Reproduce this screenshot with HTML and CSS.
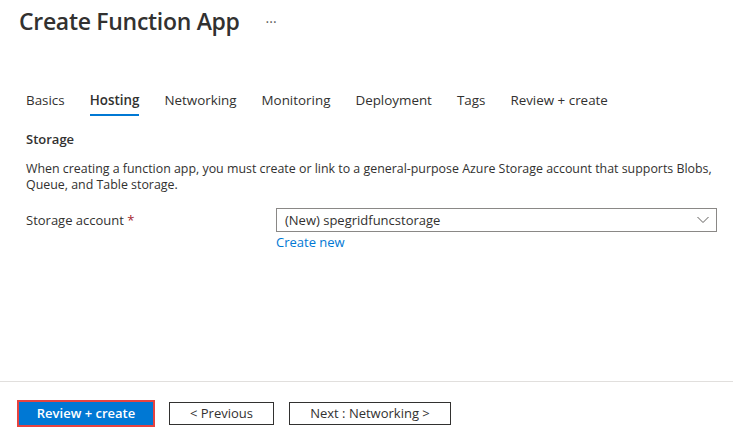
FILE: index.html
```html
<!DOCTYPE html>
<html lang="en">
<head>
<meta charset="utf-8">
<title>Create Function App</title>
<link rel="stylesheet" href="styles.css">
</head>
<body>
<div class="page">
  <main class="main">
    <header class="header">
      <h1 class="title">Create Function App</h1>
      <span class="more">···</span>
    </header>
    <nav class="tabs">
      <span class="tab">Basics</span>
      <span class="tab active">Hosting</span>
      <span class="tab">Networking</span>
      <span class="tab">Monitoring</span>
      <span class="tab">Deployment</span>
      <span class="tab">Tags</span>
      <span class="tab">Review + create</span>
    </nav>
    <section class="content">
      <h2 class="section-title">Storage</h2>
      <p class="desc">When creating a function app, you must create or link to a general-purpose Azure Storage account that supports Blobs, Queue, and Table storage.</p>
      <div class="row">
        <label class="label">Storage account <span class="req">*</span></label>
        <div class="field">
          <div class="select">
            <span>(New) spegridfuncstorage</span>
            <svg class="chev" width="12" height="8" viewBox="0 0 12 8"><path d="M0.5 1 L6 6.5 L11.5 1" fill="none" stroke="#605e5c" stroke-width="1"/></svg>
          </div>
          <a class="link">Create new</a>
        </div>
      </div>
    </section>
  </main>
  <footer class="footer">
    <span class="btn-wrap"><button class="btn primary">Review + create</button></span>
    <button class="btn secondary prev">&lt; Previous</button>
    <button class="btn secondary next">Next : Networking &gt;</button>
  </footer>
</div>
</body>
</html>
```

FILE: styles.css
```css
html, body {
  margin: 0;
  padding: 0;
  background: #ffffff;
}
body {
  font-family: "Open Sans", "Noto Sans", "Liberation Sans", sans-serif;
  color: #323130;
  font-size: 13px;
}
.page {
  height: 100vh;
  display: flex;
  flex-direction: column;
}
.main {
  flex: 1;
}
.header {
  display: flex;
  align-items: center;
  padding: 5px 0 0 19px;
  height: 32px;
}
.title {
  margin: 0;
  font-size: 23px;
  font-weight: 600;
  line-height: 32px;
  letter-spacing: -0.3px;
  color: #323130;
}
.more {
  margin-left: 26px;
  font-size: 14px;
  color: #605e5c;
}
.tabs {
  display: flex;
  gap: 25px;
  padding: 0 0 0 26px;
  margin-top: 54px;
}
.tab {
  font-size: 13.4px;
  line-height: 18px;
  padding-bottom: 5px;
  border-bottom: 2px solid transparent;
  color: #323130;
}
.tab.active {
  font-weight: 600;
  border-bottom-color: #0078d4;
}
.content {
  padding: 0 16px 0 26px;
}
.section-title {
  margin: 14px 0 0 0;
  font-size: 13px;
  font-weight: 600;
  line-height: 18px;
}
.desc {
  margin: 13px 0 0 0;
  font-size: 12.4px;
  line-height: 16px;
}
.row {
  display: flex;
  margin-top: 15px;
}
.label {
  width: 250px;
  line-height: 24px;
}
.req {
  color: #a4262c;
}
.field {
  flex: 1;
  display: flex;
  flex-direction: column;
}
.select {
  height: 22px;
  border: 1px solid #8a8886;
  display: flex;
  align-items: center;
  justify-content: space-between;
  padding: 0 7px 0 8px;
}
.chev {
  display: block;
}
.link {
  color: #0078d4;
  line-height: 20px;
}
.footer {
  border-top: 1px solid #e1dfdd;
  height: 60px;
  display: flex;
  align-items: flex-start;
  padding: 18px 0 0 17px;
  box-sizing: border-box;
}
.btn-wrap {
  border: 2px solid #e74340;
  display: flex;
}
.btn {
  font-family: inherit;
  font-size: 13px;
  height: 23px;
  margin: 0;
  padding: 0;
  line-height: 21px;
}
.primary {
  width: 134px;
  background: #0078d4;
  color: #ffffff;
  border: 0;
  font-weight: 600;
}
.secondary {
  background: #ffffff;
  border: 1px solid #323130;
  color: #323130;
  margin-top: 2px;
}
.prev {
  width: 105px;
  margin-left: 14px;
}
.next {
  width: 162px;
  margin-left: 15px;
}
```
